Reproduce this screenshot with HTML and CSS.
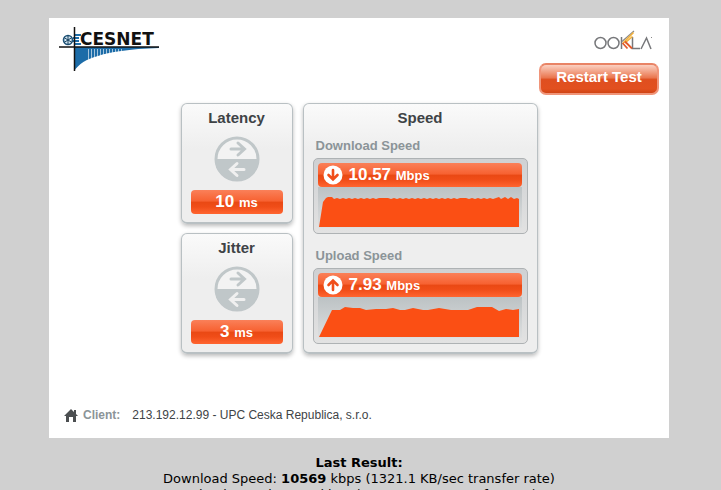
FILE: index.html
```html
<!DOCTYPE html>
<html lang="en">
<head>
<meta charset="utf-8">
<title>CESNET Speed Test</title>
<link rel="stylesheet" href="styles.css">
</head>
<body>
<main class="tester">
  <header class="top">
    <svg class="cesnet" width="102" height="46" viewBox="0 0 102 46" role="img" aria-label="CESNET">
      <path fill="#1c6ca8" d="M15 21H100V22C70 23 50 26 39 30C27 33 20 38 15 45Z"/>
      <path stroke="#fff" stroke-opacity=".6" d="M29.500 23V36M32.500 23V35M35.500 23V34M38.500 23V33M41.500 23V32M44.500 23V31M47.500 23V30M50.500 23V30M53.500 23V29M56.500 23V29M59.500 23V28M62.500 23V28"/>
      <path stroke="#1c6ca8" stroke-width="2" d="M15 9H22M14 12H20M14 15H20M15 18H22"/>
      <ellipse cx="9" cy="14" rx="4.500" ry="4.500" fill="#d5e7f2" stroke="#22567b" stroke-width="1.600"/>
      <path d="M5 11.500L13 16.500M5 16.500L13 11.500M9 9V19" stroke="#17415f"/>
      <path d="M0 21H100M15.500 1V45" stroke="#111" stroke-width="1.500"/>
      <text x="21" y="19" class="cesnet-name">CESNET</text>
    </svg>
    <div class="actions">
      <svg class="ookla" width="60" height="22" viewBox="0 0 60 22" role="img" aria-label="Ookla">
        <g fill="none" stroke="#77787b" stroke-width="1.500">
          <ellipse cx="7.500" cy="13" rx="5.500" ry="5.500"/><ellipse cx="20.500" cy="13" rx="5.500" ry="5.500"/>
          <path d="M28.500 7V19M39.500 7V18.500H47M48 19L53.500 8L58 19"/>
        </g>
        <path d="M29 11.500L41 1" stroke="#8d8a87" stroke-width="1.200"/>
        <path d="M30 13L40.500 2.500M32 13L39.500 6.500" stroke="#f3b23d" stroke-width="1.600"/>
        <path d="M32 11.500L39 18.500M29.500 13L34.500 18.500" stroke="#e35a2b" stroke-width="1.800"/>
        <path d="M58 7.500H59" stroke="#888"/>
      </svg>
      <button class="restart" type="button">Restart Test</button>
    </div>
  </header>

  <div class="results">
    <div class="column">
      <section class="card small">
        <h2>Latency</h2>
        <svg class="swap" width="46" height="46" viewBox="0 0 46 46" aria-hidden="true"><circle cx="23" cy="23" r="21" fill="#f3f3f3" stroke="#c0c7c9" stroke-width="3"/><path fill="#c0c7c9" d="M1 23H45A22 22 0 0 1 1 23Z"/><g fill="none" stroke-width="3" stroke-linecap="round"><path stroke="#c0c7c9" d="M17 13H30M24 7L30.500 13L24 19"/><path stroke="#f0f0f0" d="M30 33.500H17M23 27.500L16.500 33.500L23 39.500"/></g></svg>
        <p class="value">10 <span class="unit">ms</span></p>
      </section>
      <section class="card small">
        <h2>Jitter</h2>
        <svg class="swap" width="46" height="46" viewBox="0 0 46 46" aria-hidden="true"><circle cx="23" cy="23" r="21" fill="#f3f3f3" stroke="#c0c7c9" stroke-width="3"/><path fill="#c0c7c9" d="M1 23H45A22 22 0 0 1 1 23Z"/><g fill="none" stroke-width="3" stroke-linecap="round"><path stroke="#c0c7c9" d="M17 13H30M24 7L30.500 13L24 19"/><path stroke="#f0f0f0" d="M30 33.500H17M23 27.500L16.500 33.500L23 39.500"/></g></svg>
        <p class="value">3 <span class="unit">ms</span></p>
      </section>
    </div>
    <section class="card speed">
      <h2>Speed</h2>
      <h3>Download Speed</h3>
      <div class="meter">
        <p class="value"><svg width="20" height="20" viewBox="0 0 20 20" aria-hidden="true"><circle cx="10" cy="10" r="9.500" fill="#fff"/><path d="M10 5V14M5.500 10L10 14.500L14.500 10" fill="none" stroke="#f04e1a" stroke-width="2.600" stroke-linecap="round"/></svg><span>10.57 <span class="unit">Mbps</span></span></p>
        <svg class="graph" viewBox="0 0 204 41" preserveAspectRatio="none" aria-hidden="true"><path fill="#fb4f14" d="M1 40L5 15L8 11L10 10H14L16 12L19 11L22 12L25 11L28 12L31 11L34 12L37 11L40 12L43 11L46 12L49 11L52 12L55 11L58 12L61 11L70 11L73 12L76 11L79 12L82 11L85 12L88 11L91 12L94 11L97 12L100 11L103 12L106 11L109 12L112 11L115 12L118 11L121 12L124 11L127 12L130 11L133 12L136 11L139 12L142 11H148L151 12L154 11L157 12L160 11L163 12L166 11L169 12L172 11L175 12L178 11L181 10L183 12L187 10L190 12L193 10L196 12L199 11L201 12V40Z"/></svg>
      </div>
      <h3 class="upload">Upload Speed</h3>
      <div class="meter">
        <p class="value"><svg width="20" height="20" viewBox="0 0 20 20" aria-hidden="true"><circle cx="10" cy="10" r="9.500" fill="#fff"/><path d="M10 15V6M5.500 10L10 5.500L14.500 10" fill="none" stroke="#f04e1a" stroke-width="2.600" stroke-linecap="round"/></svg><span>7.93 <span class="unit">Mbps</span></span></p>
        <svg class="graph" viewBox="0 0 204 41" preserveAspectRatio="none" aria-hidden="true"><path fill="#fb4f14" d="M1 40L14 13H22L27 10L35 11L42 11L48 13L58 12L68 12L75 11L82 13H87L95 11L105 13H110L121 11L133 13H150L159 10H174L181 14L188 12L195 13L201 12V40Z"/></svg>
      </div>
    </section>
  </div>

  <footer class="client">
    <svg width="14" height="13" viewBox="0 0 14 13" aria-hidden="true"><path fill="#4c4f51" d="M0 7L7 0L10 3V1H12V5L14 7H12V13H9V8H5V13H2V7Z"/></svg>
    <strong>Client:</strong>
    <span>213.192.12.99 - UPC Ceska Republica, s.r.o.</span>
  </footer>
</main>
<section class="last">
  <b>Last Result:</b><br>
  Download Speed: <b>10569</b> kbps (1321.1 KB/sec transfer rate)<br>
  Upload Speed: <b>7927</b> kbps (990.9 KB/sec transfer rate)
</section>
</body>
</html>
```

FILE: styles.css
```css
* { box-sizing: border-box; }
html, body { height: 100%; }
body {
  margin: 0;
  padding: 18px 52px 0 49px;
  overflow: hidden;
  background: #d0d0d0;
  color: #3e4346;
  font-family: "Liberation Sans", Arial, sans-serif;
}
h2, h3, p { margin: 0; }
svg { display: block; flex: none; }
.tester {
  padding: 8px 10px 16px;
  background: #fff;
}
.top { display: flex; justify-content: space-between; }
.cesnet-name {
  font: bold 17px "DejaVu Sans", Verdana, sans-serif;
  fill: #111;
}
.actions { display: flex; flex-direction: column; align-items: flex-end; gap: 11px; padding-top: 4px; }
.ookla { margin-right: 6px; }
.restart {
  width: 120px;
  height: 32px;
  padding: 0 0 5px;
  border: 2px solid #f0957a;
  border-top-color: #e98466;
  border-radius: 7px;
  background: linear-gradient(#fbd1c2, #ea7750 45%, #df4f20 52%, #e2501f 85%, #cf4415);
  color: #fff;
  font: bold 15px "Liberation Sans", Arial, sans-serif;
}
.results { display: flex; justify-content: center; gap: 10px; padding-top: 8px; }
.column { display: flex; flex-direction: column; gap: 9px; }
.card {
  border: 1px solid #b9c0c3;
  border-bottom-width: 2px;
  border-radius: 6px;
  background: linear-gradient(#fafafa, #eee 45px);
  box-shadow: 0 2px 4px #0004;
}
.small { width: 112px; height: 121px; padding: 4px 9px; }
h2 { font-size: 15px; line-height: 20px; text-align: center; }
.swap { margin: 8px auto; }
.value {
  height: 24px;
  border-radius: 4px;
  background: linear-gradient(#fa8059, #f76232 45%, #ea4914 52%, #f04d18 70%, #ff6530);
  color: #fff;
  font-size: 17px;
  font-weight: bold;
  line-height: 24px;
  text-align: center;
}
.unit { font-size: 13px; }
.speed { width: 235px; padding: 4px 9px 7px; }
h3 { margin: 10px 0 4px 3px; color: #8b9498; font-size: 13px; line-height: 16px; }
.upload { margin-top: 14px; }
.meter {
  padding: 4px 5px 5px 4px;
  border: 1px solid #aeb2b4;
  border-radius: 5px;
  background: linear-gradient(#cfd1d3, #e2e2e2);
}
.meter .value { display: flex; align-items: center; gap: 6px; padding-left: 5px; }
.graph { width: 100%; height: 41px; background: linear-gradient(#bcc2c4, #dddfe0); }
.client { display: flex; align-items: center; gap: 5px; padding: 54px 0 0 5px; font-size: 12px; line-height: 14px; }
.client strong { margin-right: 7px; color: #8b9498; }
.last {
  padding-top: 17px;
  color: #000;
  font-family: "DejaVu Sans", Verdana, sans-serif;
  font-size: 13px;
  line-height: 16px;
  text-align: center;
}
```
